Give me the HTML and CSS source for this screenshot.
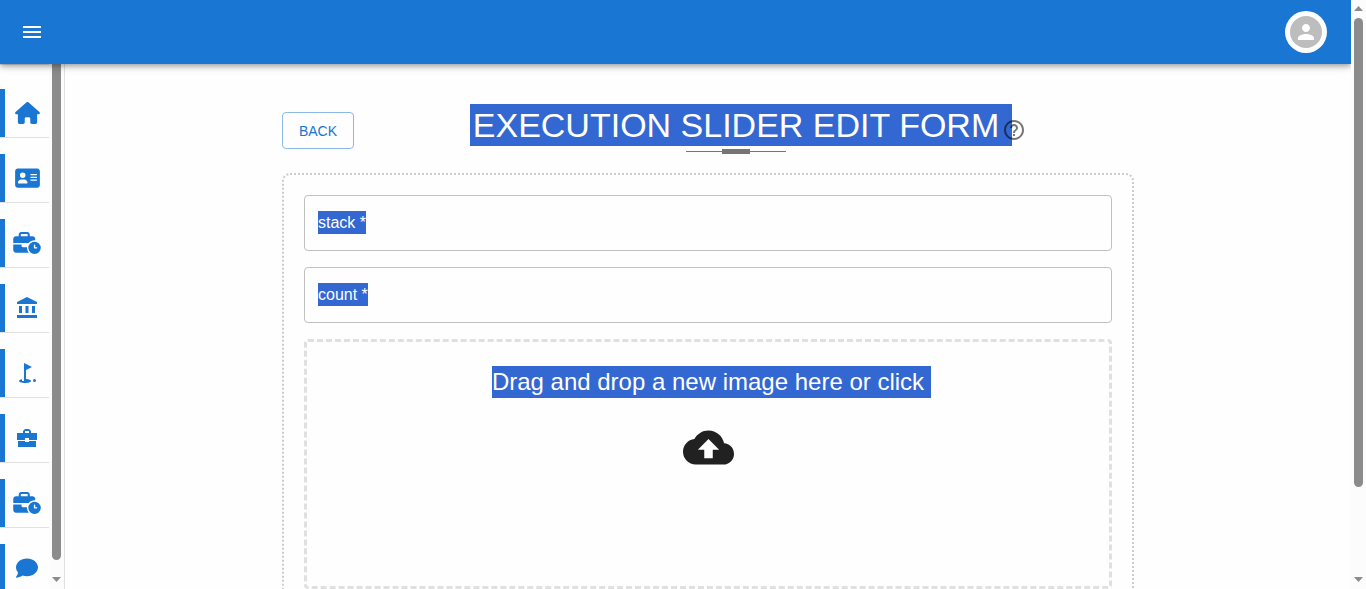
FILE: index.html
```html
<!DOCTYPE html>
<html lang="en">
<head>
<meta charset="utf-8">
<meta name="viewport" content="width=device-width, initial-scale=1">
<title>Execution Slider Edit Form</title>
<link rel="stylesheet" href="styles.css">
</head>
<body>
<svg class="sprite" aria-hidden="true">
  <symbol id="business-time" viewBox="0 0 640 512"><path d="M184 48l144 0c4.400 0 8 3.600 8 8l0 40L176 96l0-40c0-4.400 3.600-8 8-8zm-56 8l0 40L64 96C28.700 96 0 124.700 0 160l0 96 192 0 160 0 8.200 0c32.300-39.100 81.100-64 135.800-64c5.400 0 10.700 .2 16 .7l0-32.700c0-35.300-28.700-64-64-64l-64 0 0-40c0-30.900-25.100-56-56-56L184 0c-30.900 0-56 25.100-56 56zM320 352l-96 0c-17.700 0-32-14.300-32-32l0-32L0 288 0 416c0 35.300 28.700 64 64 64l296.200 0C335.100 449.600 320 410.500 320 368c0-5.400 .2-10.700 .7-16l-.7 0zm320 16a144 144 0 1 0 -288 0 144 144 0 1 0 288 0zM496 288c8.800 0 16 7.200 16 16l0 48 32 0c8.800 0 16 7.200 16 16s-7.200 16-16 16l-48 0c-8.800 0-16-7.200-16-16l0-64c0-8.800 7.200-16 16-16z"/></symbol>
</svg>
<div class="app">
  <header class="topbar">
    <button class="icon-button" type="button" aria-label="Open menu">
      <svg class="icon-md" viewBox="0 0 24 24"><path d="M3 18h18v-2H3v2zm0-5h18v-2H3v2zm0-7v2h18V6H3z"/></svg>
    </button>
    <button class="avatar-button" type="button" aria-label="Account">
      <span class="avatar"><svg class="icon-md" viewBox="0 0 24 24"><path d="M12 12c2.210 0 4-1.790 4-4s-1.790-4-4-4-4 1.790-4 4 1.790 4 4 4zm0 2c-2.670 0-8 1.340-8 4v2h16v-2c0-2.660-5.330-4-8-4z"/></svg></span>
    </button>
  </header>
  <div class="body">
    <aside class="sidebar">
      <nav class="side-nav" aria-label="Main">
        <a class="side-link" href="#home" aria-label="Home"><svg class="icon-card" viewBox="0 0 576 512"><path d="M575.800 255.500c0 18-15 32.100-32 32.100h-32l.7 160.200c0 2.700-.2 5.400-.5 8.100V472c0 22.100-17.900 40-40 40H456c-1.100 0-2.200 0-3.300-.1c-1.400 .1-2.800 .1-4.200 .1H416 392c-22.100 0-40-17.900-40-40V448 384c0-17.700-14.300-32-32-32H256c-17.700 0-32 14.300-32 32v64 24c0 22.100-17.900 40-40 40H160 128.100c-1.500 0-3-.1-4.500-.2c-1.200 .1-2.400 .2-3.600 .2H104c-22.100 0-40-17.900-40-40V360c0-.9 0-1.900 .1-2.800V287.600H32c-18 0-32-14-32-32.100c0-9 3-17 10-24L266.400 8c7-7 15-8 22-8s15 2 21 7L564.800 231.500c8 7 12 15 11 24z"/></svg></a>
        <a class="side-link" href="#profile" aria-label="Profile"><svg class="icon-card" viewBox="0 0 576 512"><path d="M64 32C28.700 32 0 60.700 0 96V416c0 35.300 28.700 64 64 64H512c35.300 0 64-28.700 64-64V96c0-35.300-28.700-64-64-64H64zm80 256h64c44.200 0 80 35.800 80 80c0 8.800-7.200 16-16 16H80c-8.800 0-16-7.200-16-16c0-44.200 35.800-80 80-80zm-32-96a64 64 0 1 1 128 0 64 64 0 1 1 -128 0zm256-32H496c8.800 0 16 7.200 16 16s-7.200 16-16 16H368c-8.800 0-16-7.200-16-16s7.200-16 16-16zm0 64H496c8.800 0 16 7.200 16 16s-7.200 16-16 16H368c-8.800 0-16-7.200-16-16s7.200-16 16-16zm0 64H496c8.800 0 16 7.200 16 16s-7.200 16-16 16H368c-8.800 0-16-7.200-16-16s7.200-16 16-16z"/></svg></a>
        <a class="side-link" href="#experience" aria-label="Experience"><svg class="icon-time"><use href="#business-time"/></svg></a>
        <a class="side-link" href="#institution" aria-label="Institution"><svg class="icon-md" viewBox="0 0 24 24"><path d="M12 1l10 5v2H2V6zM4 10h3v7H4zM10.500 10h3v7h-3zM17 10h3v7h-3zM2 19h20v3H2z"/></svg></a>
        <a class="side-link" href="#goals" aria-label="Goals"><svg class="icon-md" viewBox="0 0 24 24"><circle cx="19.500" cy="19.500" r="1.500"/><path d="M17 5.920L9 2v18H7v-1.730c-1.790.35-3 .99-3 1.730 0 1.100 2.690 2 6 2s6-.9 6-2c0-.99-2.160-1.810-5-1.980V8.980l6-3.060z"/></svg></a>
        <a class="side-link" href="#portfolio" aria-label="Portfolio"><svg class="icon-md" viewBox="0 0 24 24"><path fill-rule="evenodd" d="M8 7V5l2-2h4l2 2v2h6v7h-8v-2h-4v2H2V7zM10 7h4V5h-4z"/><path d="M3 15h7v1h4v-1h7v6H3z"/></svg></a>
        <a class="side-link" href="#execution" aria-label="Execution"><svg class="icon-time"><use href="#business-time"/></svg></a>
        <a class="side-link" href="#messages" aria-label="Messages"><svg class="icon-chat" viewBox="0 0 512 512"><path d="M512 240c0 114.900-114.600 208-256 208c-37.100 0-72.300-6.400-104.100-17.900c-11.900 8.700-31.300 20.600-54.300 30.600C73.600 471.100 44.700 480 16 480c-6.500 0-12.300-3.900-14.800-9.900c-2.500-6-1.100-12.800 3.400-17.400c.3-.3 .7-.7 1.300-1.400c1.100-1.200 2.800-3.100 4.900-5.700c4.100-5 9.600-12.400 15.200-21.600c10-16.600 19.500-38.400 21.400-62.900C17.700 326.800 0 285.100 0 240C0 125.100 114.600 32 256 32s256 93.100 256 208z"/></svg></a>
      </nav>
      <div class="scrollbar side-scroll" aria-hidden="true">
        <span class="thumb"></span>
        <svg class="arrow" viewBox="0 0 9 5"><path d="M0 0h9L4.500 5z"/></svg>
      </div>
    </aside>
    <main class="content">
      <div class="column">
        <div class="heading-row">
          <button class="back" type="button">BACK</button>
          <div class="heading">
            <div class="title-block">
              <h1 class="title"><span class="selected">EXECUTION SLIDER EDIT FORM</span></h1>
              <div class="rule"><span class="rule-mark"></span></div>
            </div>
            <button class="help" type="button" aria-label="Help">
              <svg class="icon-md" viewBox="0 0 24 24"><path d="M11 18h2v-2h-2v2zm1-16C6.480 2 2 6.480 2 12s4.480 10 10 10 10-4.480 10-10S17.520 2 12 2zm0 18c-4.410 0-8-3.590-8-8s3.590-8 8-8 8 3.590 8 8-3.590 8-8 8zm0-14c-2.210 0-4 1.790-4 4h2c0-1.100.9-2 2-2s2 .9 2 2c0 2-3 1.750-3 5h2c0-2.250 3-2.500 3-5 0-2.210-1.790-4-4-4z"/></svg>
            </button>
          </div>
        </div>
        <form class="card">
          <div class="field">
            <input class="field-input" id="stack" type="text" required>
            <label class="field-label" for="stack">stack *</label>
          </div>
          <div class="field">
            <input class="field-input" id="count" type="text" required>
            <label class="field-label" for="count">count *</label>
          </div>
          <button class="dropzone" type="button">
            <span class="drop-text selected">Drag and drop a new image here or click</span>
            <svg class="icon-cloud" viewBox="0 0 24 24"><path d="M19.350 10.040C18.670 6.590 15.640 4 12 4 9.110 4 6.600 5.640 5.350 8.040 2.340 8.360 0 10.910 0 14c0 3.310 2.690 6 6 6h13c2.760 0 5-2.240 5-5 0-2.640-2.050-4.780-4.650-4.960zM14 13v4h-4v-4H7l5-5 5 5h-3z"/></svg>
          </button>
        </form>
      </div>
    </main>
  </div>
</div>
<div class="scrollbar" aria-hidden="true">
  <svg class="arrow" viewBox="0 0 9 5"><path d="M0 5h9L4.500 0z"/></svg>
  <span class="thumb page-thumb"></span>
  <svg class="arrow" viewBox="0 0 9 5"><path d="M0 0h9L4.500 5z"/></svg>
</div>
</body>
</html>
```
FILE: styles.css
```css
* { box-sizing: border-box; }

body {
  margin: 0;
  height: 100vh;
  display: flex;
  overflow: hidden;
  background: #fefefe;
  color: #212121;
  font-family: "Liberation Sans", Arial, sans-serif;
}

button { font-family: inherit; cursor: pointer; }
svg { display: block; fill: currentColor; flex: none; }
.sprite { position: absolute; width: 0; height: 0; }
.icon-md { width: 24px; height: 24px; }
.icon-card { width: 25px; height: 22px; }
.icon-time { width: 28px; height: 22px; }
.icon-chat { width: 22px; height: 22px; }
.icon-cloud { width: 51px; height: 51px; }

.app {
  flex: 1;
  min-width: 0;
  display: flex;
  flex-direction: column;
  overflow: hidden;
}

.topbar {
  flex: none;
  height: 64px;
  padding: 0 24px 0 12px;
  display: flex;
  align-items: center;
  justify-content: space-between;
  background: #1976d2;
  color: #fff;
  z-index: 1;
  box-shadow: 0 2px 4px -1px rgba(0, 0, 0, .2), 0 4px 5px rgba(0, 0, 0, .14), 0 1px 10px rgba(0, 0, 0, .12);
}

.icon-button {
  padding: 8px;
  border: 0;
  background: none;
  color: inherit;
}

.avatar-button {
  padding: 5px;
  border: 0;
  border-radius: 50%;
  background: #fff;
}

.avatar {
  width: 32px;
  height: 32px;
  display: flex;
  align-items: center;
  justify-content: center;
  border-radius: 50%;
  background: #bdbdbd;
  color: #fff;
}

.body { flex: 1; min-height: 0; display: flex; }

.sidebar {
  flex: none;
  display: flex;
  border-right: 1px solid #e0e0e0;
  overflow: hidden;
}

.side-nav {
  width: 49px;
  display: flex;
  flex-direction: column;
  gap: 16px;
  padding-top: 24px;
  border-top: 1px solid #e0e0e0;
}

.side-link {
  flex: none;
  height: 49px;
  display: flex;
  align-items: center;
  justify-content: center;
  border-bottom: 1px solid #e0e0e0;
  background: linear-gradient(#1976d2, #1976d2) left / 5px 100% no-repeat;
  padding-left: 5px;
  color: #1976d2;
}

.scrollbar {
  flex: none;
  width: 15px;
  padding: 6px 0 7px;
  display: flex;
  flex-direction: column;
  align-items: center;
  background: #fcfcfc;
}

.side-scroll { padding-top: 0; justify-content: space-between; }
.side-scroll .thumb { flex: 1; margin-bottom: 17px; border-radius: 0 0 5px 5px; }
.arrow { width: 9px; height: 5px; color: #8b8b8b; }
.thumb { width: 9px; background: #8b8b8b; }
.page-thumb { height: 81.4%; margin: 7px 0 auto; border-radius: 5px; }

.content {
  flex: 1;
  min-width: 0;
  padding: 40px 4px 0;
  display: grid;
  grid-template-columns: 1fr 4fr 1fr;
  overflow: hidden;
}

.column { grid-column: 2; min-width: 0; }

.heading-row {
  display: flex;
  align-items: flex-start;
  gap: 8px;
}

.back {
  margin-top: 8px;
  padding: 0 15px;
  height: 37px;
  min-width: 72px;
  border: 1px solid #8cbae8;
  border-radius: 4px;
  background: none;
  color: #1976d2;
  font-size: 14px;
}

.heading {
  flex: 1;
  display: flex;
  align-items: flex-start;
  justify-content: center;
}

.title-block {
  display: flex;
  flex-direction: column;
  align-items: center;
  gap: 3px;
}

.title {
  margin: 0;
  font-size: 34px;
  font-weight: 400;
  line-height: 42px;
  white-space: nowrap;
}

.selected {
  display: block;
  background: #3367d1;
  color: #fff;
}

.title .selected { padding: 0 13px 0 3px; margin-right: -10px; }

.rule {
  width: 100px;
  height: 5px;
  display: flex;
  justify-content: center;
  background: linear-gradient(#757575, #757575) center / 100% 1px no-repeat;
}

.rule-mark { width: 28px; background: #757575; }

.help {
  margin-top: 14px;
  padding: 0;
  border: 0;
  background: none;
  color: rgba(0, 0, 0, .54);
  z-index: 1;
}

.card {
  margin-top: 19px;
  padding: 20px;
  display: flex;
  flex-direction: column;
  gap: 16px;
  border: 2px dotted #ccc;
  border-radius: 8px;
}

.field { position: relative; }

.field-input {
  display: block;
  width: 100%;
  height: 56px;
  padding: 0 14px;
  border: 1px solid #c0c0c0;
  border-radius: 4px;
  background: none;
  font: 16px "Liberation Sans", Arial, sans-serif;
}

.field-label {
  position: absolute;
  top: 16px;
  left: 14px;
  background: #3367d1;
  color: #fff;
  font-size: 16px;
  line-height: 23px;
}

.dropzone {
  min-height: 250px;
  padding: 24px;
  display: flex;
  flex-direction: column;
  align-items: center;
  gap: 24px;
  border: 3px dashed #e0e0e0;
  border-radius: 4px;
  background: none;
  color: #212121;
}

.drop-text {
  padding-right: 7px;
  margin-right: -7px;
  font-size: 24px;
  line-height: 32px;
}
```
